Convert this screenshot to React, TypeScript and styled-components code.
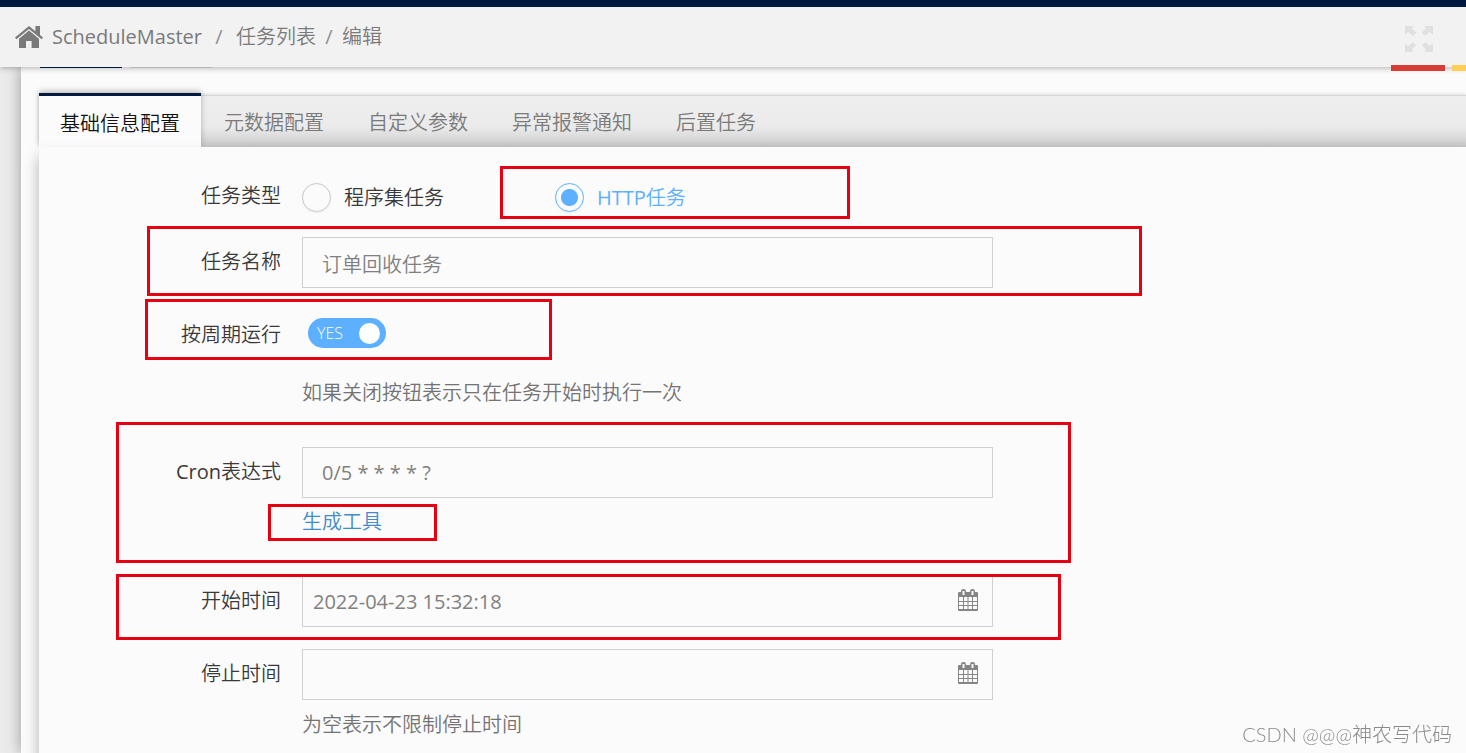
import React, { useState } from "react";
import styled, { createGlobalStyle, css } from "styled-components";

const NAVY = "#00193f";
const BLUE = "#5cb0ff";
const PAPER = "#fbfbfb";

const GlobalStyle = createGlobalStyle`
  * { box-sizing: border-box; }
  body {
    margin: 0;
    overflow: hidden;
    background: #ebebeb;
    color: #393939;
    font-family: "Open Sans", "Noto Sans CJK SC", sans-serif;
    font-size: 20px;
    font-weight: 350;
    line-height: 28px;
  }
  button, input { font: inherit; color: inherit; }
`;

const Page = styled.div`
  display: flex;
  flex-direction: column;
  height: 100vh;
`;

const Header = styled.header`
  position: relative;
  z-index: 2;
  flex: none;
  display: flex;
  align-items: center;
  justify-content: space-between;
  height: 67px;
  padding: 0 33px 0 15px;
  border-top: 7px solid ${NAVY};
  background: #f2f2f2;
  box-shadow: 0 1px 6px rgba(0, 0, 0, 0.3);
`;

const Crumbs = styled.nav`
  display: flex;
  align-items: center;
  color: #7a7a7a;

  svg { margin-right: 9px; }
`;

const Crumb = styled.a<{ $strong?: boolean }>`
  color: inherit;
  text-decoration: none;
  font-weight: ${(p) => (p.$strong ? 400 : 350)};
`;

const Slash = styled.span<{ $wide?: boolean }>`
  width: ${(p) => (p.$wide ? 34 : 26)}px;
  text-align: center;
  font-weight: 400;
  color: #909090;
`;

const IconButton = styled.button`
  display: flex;
  padding: 4px 0 0;
  border: 0;
  background: none;
  color: #e0e0e0;
`;

const CornerBars = styled.div`
  position: absolute;
  right: 0;
  bottom: -4px;
  display: flex;
  gap: 7px;
`;

const CornerBar = styled.span<{ $color: string; $width: number }>`
  width: ${(p) => p.$width}px;
  height: 6px;
  background: ${(p) => p.$color};
`;

const Content = styled.main`
  flex: 1;
  display: flex;
  flex-direction: column;
  min-height: 0;
  margin-left: 21px;
  padding-left: 18px;
  background: ${PAPER};
  box-shadow: 0 0 14px rgba(0, 0, 0, 0.35);
`;

const ButtonEdges = styled.div`
  position: relative;
  z-index: 3;
  flex: none;
  display: flex;
  gap: 8px;
  height: 28px;
  padding-left: 1px;
`;

const ButtonEdge = styled.span<{ $color: string }>`
  width: 82px;
  height: 1px;
  background: ${(p) => p.$color};
`;

const TabBar = styled.div`
  flex: none;
  display: flex;
  align-items: flex-end;
  gap: 2px;
  height: 52px;
  border-top: 1px solid #d6d6d6;
  background: linear-gradient(#eeeeee 0, #ebebeb 60%, #dcdcdc 80%, #c4c4c4 100%);
  box-shadow: 0 -1px 3px rgba(0, 0, 0, 0.12);
`;

const Tab = styled.button<{ $active: boolean }>`
  height: 51px;
  padding: 2px 21px 0;
  border: 0;
  background: none;
  color: #7a7a7a;
  cursor: pointer;

  ${(p) =>
    p.$active &&
    css`
      height: 54px;
      padding-top: 4px;
      border-top: 3px solid ${NAVY};
      background: ${PAPER};
      color: #111;
      box-shadow: 0 -2px 6px rgba(0, 0, 0, 0.25);
    `}
`;

const Panel = styled.form`
  position: relative;
  flex: 1;
  padding-top: 24px;
  background: ${PAPER};
  box-shadow: 0 10px 14px rgba(0, 0, 0, 0.3);
`;

const Row = styled.div<{ $space?: number }>`
  display: grid;
  grid-template-columns: 242px minmax(0, 691px);
  column-gap: 21px;
  align-items: start;
  margin-bottom: ${(p) => p.$space ?? 22}px;
`;

const labelText = css`
  line-height: 50px;
  text-align: right;
`;

const Label = styled.label`${labelText}`;
const GroupLabel = styled.span`${labelText}`;

const Latin = styled.span`
  font-weight: 400;
`;

const Field = styled.div`
  position: relative;
  min-width: 0;
`;

const TextBox = styled.input<{ $indent: number; $latin?: boolean }>`
  display: block;
  width: 100%;
  height: 51px;
  padding: ${(p) => (p.$latin ? 0 : 2)}px 50px 0 ${(p) => p.$indent}px;
  border: 1px solid #d0d0d0;
  border-radius: 0;
  outline: 0;
  background: ${PAPER};
  color: #808080;
  font-weight: ${(p) => (p.$latin ? 400 : 350)};
`;

const FieldIcon = styled.button`
  position: absolute;
  top: 0;
  right: 15px;
  display: flex;
  align-items: center;
  height: 48px;
  padding: 0;
  border: 0;
  background: none;
  color: #858585;
`;

const Options = styled.div`
  display: grid;
  grid-template-columns: 253px 253px;
  height: 51px;
`;

const Option = styled.label<{ $checked: boolean }>`
  display: flex;
  align-items: center;
  gap: 13px;
  height: 53px;
  color: ${(p) => (p.$checked ? BLUE : "#393939")};
`;

const Radio = styled.input`
  appearance: none;
  width: 29px;
  height: 29px;
  margin: 0;
  border: 1px solid #c8c8c8;
  border-radius: 50%;
  background: ${PAPER};
  box-shadow: 0 1px 2px rgba(0, 0, 0, 0.05);

  &:checked {
    border-color: ${BLUE};
    background: radial-gradient(circle, ${BLUE} 8px, ${PAPER} 9px);
  }
`;

const Toggle = styled.label`
  position: relative;
  display: flex;
  align-items: center;
  width: 78px;
  height: 30px;
  margin: 8px 0 0 6px;
  padding-left: 9px;
  border-radius: 15px;
  background: ${BLUE};
  color: #fff;
  font-size: 16px;
`;

const ToggleInput = styled.input`
  appearance: none;
  position: absolute;
  inset: 0;
  margin: 0;

  &::after {
    content: "";
    position: absolute;
    top: 5px;
    left: 6px;
    width: 21px;
    height: 21px;
    border-radius: 50%;
    background: #fff;
  }
  &:checked::after { left: 51px; }
`;

const Hint = styled.p<{ $space: number }>`
  margin: ${(p) => p.$space}px 0 0;
  color: #737373;
`;

const ToolLink = styled.a`
  display: block;
  width: fit-content;
  margin-top: 10px;
  color: #428bca;
  text-decoration: none;
`;

const Mark = styled.div<{ $x: number; $y: number; $w: number; $h: number }>`
  position: absolute;
  left: ${(p) => p.$x}px;
  top: ${(p) => p.$y}px;
  width: ${(p) => p.$w}px;
  height: ${(p) => p.$h}px;
  border: 3px solid #e60012;
  pointer-events: none;
`;

const Watermark = styled.div`
  position: fixed;
  right: 14px;
  bottom: 5px;
  z-index: 4;
  color: #8a8a8a;
  font-family: Lato, "Noto Sans CJK SC", sans-serif;
  font-weight: 300;
`;

const HomeIcon = () => (
  <svg width="28" height="24" viewBox="0 0 28 24" fill="currentColor" aria-hidden="true">
    <path d="M14 1 0 12.6l1.400 1.700L14 4l12.600 10.300 1.400-1.700-3-2.500V1h-4.600v5.300z" />
    <path d="M14 5.600 4 13.800V23h7v-7h5.600v7H24v-9.200z" />
  </svg>
);

const ExpandIcon = () => (
  <svg width="28" height="26" viewBox="0 0 28 26" fill="currentColor" aria-hidden="true">
    <path d="M0 0h9L6.7 2.4l4.6 4.1-3.6 3.6-4.5-4.4L0 9z" />
    <path d="M28 0h-9l2.3 2.4-4.6 4.1 3.6 3.6 4.500-4.400L28 9z" />
    <path d="M0 26h9l-2.300-2.400 4.600-4.100-3.600-3.600-4.500 4.400L0 17z" />
    <path d="M28 26h-9l2.300-2.400-4.600-4.100 3.600-3.600 4.500 4.400L28 17z" />
  </svg>
);

const CalendarIcon = () => (
  <svg width="20" height="22" viewBox="0 0 20 22" aria-hidden="true">
    <path
      fill="currentColor"
      fillRule="evenodd"
      d="M1 3h2V2q0-2 2.500-2T8 2v1h4V2q0-2 2.500-2T17 2v1h2q1 0 1 1v17q0 1-1 1H1q-1 0-1-1V4q0-1 1-1zM4.500 2v4h2V2zM13.500 2v4h2V2zM1 8v4h4V8zM6 8v4h3.500V8zM10.500 8v4H14V8zM15 8v4h4V8zM1 13v3h4v-3zM6 13v3h3.500v-3zM10.500 13v3H14v-3zM15 13v3h4v-3zM1 17v3h4V17zM6 17v3h3.500V17zM10.500 17v3H14V17zM15 17v3h4V17z"
    />
  </svg>
);

const TABS = ["基础信息配置", "元数据配置", "自定义参数", "异常报警通知", "后置任务"];
const KINDS = [
  { latin: "", name: "程序集任务" },
  { latin: "HTTP", name: "任务" },
];
const MARKS = [
  [461, 19, 350, 53],
  [108, 79, 995, 70],
  [106, 152, 407, 61],
  [77, 275, 955, 141],
  [229, 357, 169, 37],
  [77, 427, 945, 66],
];

export default function App() {
  const [tab, setTab] = useState(0);
  const [kind, setKind] = useState(1);

  return (
    <Page>
      <GlobalStyle />
      <Header>
        <Crumbs>
          <HomeIcon />
          <Crumb href="#" $strong>ScheduleMaster</Crumb>
          <Slash $wide>/</Slash>
          <Crumb href="#">任务列表</Crumb>
          <Slash>/</Slash>
          <Crumb as="span">编辑</Crumb>
        </Crumbs>
        <IconButton type="button" aria-label="全屏">
          <ExpandIcon />
        </IconButton>
        <CornerBars>
          <CornerBar $color="#d73d32" $width={54} />
          <CornerBar $color="#ffce55" $width={14} />
        </CornerBars>
      </Header>

      <Content>
        <ButtonEdges>
          <ButtonEdge $color={NAVY} />
          <ButtonEdge $color="#b8b8b8" />
        </ButtonEdges>
        <TabBar role="tablist">
          {TABS.map((name, i) => (
            <Tab key={name} type="button" role="tab" aria-selected={tab === i} $active={tab === i} onClick={() => setTab(i)}>
              {name}
            </Tab>
          ))}
        </TabBar>

        <Panel>
          <Row $space={15} role="radiogroup" aria-labelledby="kind">
            <GroupLabel id="kind">任务类型</GroupLabel>
            <Options>
              {KINDS.map(({ latin, name }, i) => (
                <Option key={name} $checked={kind === i}>
                  <Radio type="radio" name="kind" checked={kind === i} onChange={() => setKind(i)} />
                  <span>
                    {latin && <Latin>{latin}</Latin>}
                    {name}
                  </span>
                </Option>
              ))}
            </Options>
          </Row>

          <Row>
            <Label htmlFor="title">任务名称</Label>
            <TextBox id="title" type="text" $indent={19} defaultValue="订单回收任务" />
          </Row>

          <Row $space={40}>
            <Label htmlFor="periodic">按周期运行</Label>
            <Field>
              <Toggle>
                YES
                <ToggleInput id="periodic" type="checkbox" defaultChecked />
              </Toggle>
              <Hint $space={31}>如果关闭按钮表示只在任务开始时执行一次</Hint>
            </Field>
          </Row>

          <Row $space={40}>
            <Label htmlFor="cron"><Latin>Cron</Latin>表达式</Label>
            <Field>
              <TextBox id="cron" type="text" $indent={19} $latin defaultValue="0/5 * * * * ?" />
              <ToolLink href="#">生成工具</ToolLink>
            </Field>
          </Row>

          <Row>
            <Label htmlFor="start">开始时间</Label>
            <Field>
              <TextBox id="start" type="text" $indent={10} $latin defaultValue="2022-04-23 15:32:18" />
              <FieldIcon type="button" aria-label="选择开始时间">
                <CalendarIcon />
              </FieldIcon>
            </Field>
          </Row>

          <Row>
            <Label htmlFor="stop">停止时间</Label>
            <Field>
              <TextBox id="stop" type="text" $indent={10} $latin />
              <FieldIcon type="button" aria-label="选择停止时间">
                <CalendarIcon />
              </FieldIcon>
              <Hint $space={11}>为空表示不限制停止时间</Hint>
            </Field>
          </Row>

          {MARKS.map(([x, y, w, h]) => (
            <Mark key={`${x}-${y}`} $x={x} $y={y} $w={w} $h={h} />
          ))}
        </Panel>
      </Content>

      <Watermark>CSDN @@@神农写代码</Watermark>
    </Page>
  );
}
